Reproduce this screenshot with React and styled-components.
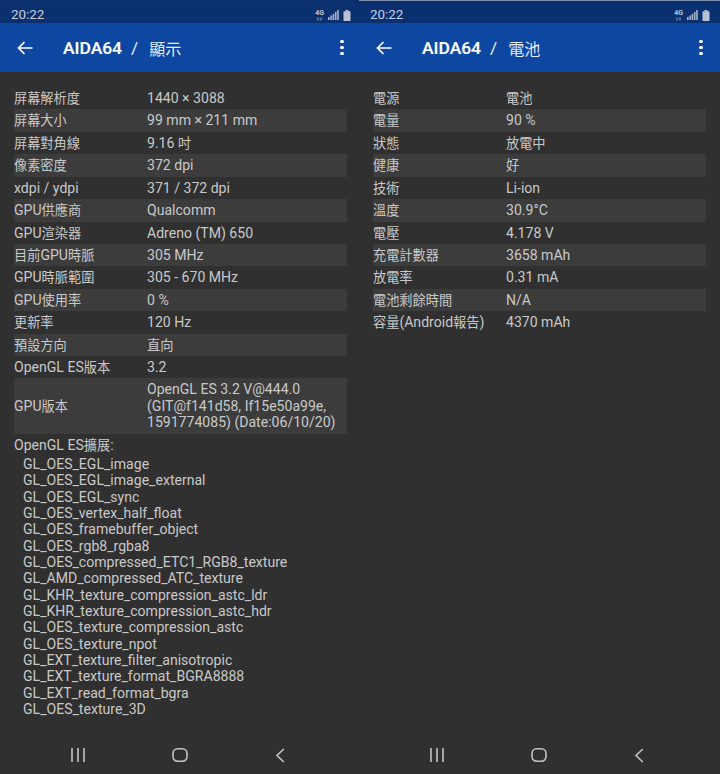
import styled, { createGlobalStyle } from 'styled-components';

const displayRows = [
  ['屏幕解析度', '1440 × 3088'],
  ['屏幕大小', '99 mm × 211 mm'],
  ['屏幕對角線', '9.16 吋'],
  ['像素密度', '372 dpi'],
  ['xdpi / ydpi', '371 / 372 dpi'],
  ['GPU供應商', 'Qualcomm'],
  ['GPU渲染器', 'Adreno (TM) 650'],
  ['目前GPU時脈', '305 MHz'],
  ['GPU時脈範圍', '305 - 670 MHz'],
  ['GPU使用率', '0 %'],
  ['更新率', '120 Hz'],
  ['預設方向', '直向'],
  ['OpenGL ES版本', '3.2'],
  ['GPU版本', 'OpenGL ES 3.2 V@444.0\n(GIT@f141d58, If15e50a99e,\n1591774085) (Date:06/10/20)'],
];

const batteryRows = [
  ['電源', '電池'],
  ['電量', '90 %'],
  ['狀態', '放電中'],
  ['健康', '好'],
  ['技術', 'Li-ion'],
  ['溫度', '30.9°C'],
  ['電壓', '4.178 V'],
  ['充電計數器', '3658 mAh'],
  ['放電率', '0.31 mA'],
  ['電池剩餘時間', 'N/A'],
  ['容量(Android報告)', '4370 mAh'],
];

const extensions = [
  'GL_OES_EGL_image',
  'GL_OES_EGL_image_external',
  'GL_OES_EGL_sync',
  'GL_OES_vertex_half_float',
  'GL_OES_framebuffer_object',
  'GL_OES_rgb8_rgba8',
  'GL_OES_compressed_ETC1_RGB8_texture',
  'GL_AMD_compressed_ATC_texture',
  'GL_KHR_texture_compression_astc_ldr',
  'GL_KHR_texture_compression_astc_hdr',
  'GL_OES_texture_compression_astc',
  'GL_OES_texture_npot',
  'GL_EXT_texture_filter_anisotropic',
  'GL_EXT_texture_format_BGRA8888',
  'GL_EXT_read_format_bgra',
  'GL_OES_texture_3D',
];

// The Han glyphs sit smaller than the Latin ones in the app, so they get their own span
const Mixed = ({ text }) =>
  text.split(/([\u4e00-\u9fff]+)/).map((part, index) =>
    index % 2 ? <Han key={index}>{part}</Han> : part
  );

const Phone = ({ title, rows, seam, children }) => (
  <Screen $seam={seam}>
    <StatusBar>
      <Clock>20:22</Clock>
      <StatusIcons>
        <NetworkBadge>
          4G
          <svg width="7" height="4" viewBox="0 0 7 4" fill="none" stroke="#8494ae" strokeWidth="0.8">
            <path d="M2 4V0.8M0.8 2 2 0.8 3.2 2M5 0v3.2M3.8 2 5 3.2 6.2 2" />
          </svg>
        </NetworkBadge>
        <svg width="11" height="10" viewBox="0 0 11 10" fill="#a9b4c8">
          <rect x="0" y="7" width="1.6" height="3" />
          <rect x="2.3" y="5.5" width="1.6" height="4.5" />
          <rect x="4.6" y="4" width="1.6" height="6" />
          <rect x="6.9" y="2" width="1.6" height="8" />
          <rect x="9.2" y="0" width="1.6" height="10" />
        </svg>
        <svg width="8" height="11" viewBox="0 0 8 11" fill="#b9c2d2">
          <rect x="2.4" y="0" width="3.2" height="1.4" />
          <rect x="0.5" y="1.2" width="7" height="9.8" rx="0.6" />
        </svg>
      </StatusIcons>
    </StatusBar>
    <AppBar>
      <svg width="16" height="14" viewBox="0 0 16 14" fill="none" stroke="#fff" strokeWidth="1.7">
        <path d="M15.5 7H1.5M7.5 1 1.5 7l6 6" />
      </svg>
      <AppTitle>
        <strong>AIDA64</strong>
        <Slash>/</Slash>
        <span>{title}</span>
      </AppTitle>
      <MenuDots>
        <i />
        <i />
        <i />
      </MenuDots>
    </AppBar>
    <Content>
      {rows.map(([label, value]) => (
        <Row key={label}>
          <Label><Mixed text={label} /></Label>
          <Value><Mixed text={value} /></Value>
        </Row>
      ))}
      {children}
    </Content>
    <NavBar>
      <svg width="14" height="14" viewBox="0 0 14 14" stroke="#c4c4c4" strokeWidth="1.6">
        <path d="M1 0v14M7 0v14M13 0v14" />
      </svg>
      <svg width="16" height="14" viewBox="0 0 16 14" fill="none" stroke="#c4c4c4" strokeWidth="1.6">
        <rect x="1" y="0.8" width="14" height="12.4" rx="4.6" />
      </svg>
      <svg width="10" height="15" viewBox="0 0 10 15" fill="none" stroke="#c4c4c4" strokeWidth="1.6">
        <path d="M8.8 1 2 7.5 8.8 14" />
      </svg>
    </NavBar>
  </Screen>
);

const App = () => (
  <>
    <GlobalStyle />
    <Page>
      <Phone title="顯示" rows={displayRows}>
        <ExtensionHeading><Mixed text="OpenGL ES擴展:" /></ExtensionHeading>
        <ExtensionList>
          {extensions.map(name => <li key={name}>{name}</li>)}
        </ExtensionList>
      </Phone>
      <Phone title="電池" rows={batteryRows} seam />
    </Page>
  </>
);

const GlobalStyle = createGlobalStyle`
  html, body {
    margin: 0;
    background: #303030;
  }

  body {
    font-family: Roboto, "Noto Sans CJK TC", sans-serif;
  }
`;

const Page = styled.div`
  display: grid;
  grid-template-columns: 359px 361px;
  width: 720px;
  height: 774px;
  overflow: hidden;
`;

const Screen = styled.div`
  display: flex;
  flex-direction: column;
  height: 774px;
  background: #303030;
  box-sizing: border-box;
  border-top: 1px solid ${props => (props.$seam ? '#7f90ad' : '#0a2e6b')};
`;

const StatusBar = styled.div`
  display: flex;
  align-items: center;
  justify-content: space-between;
  flex: 0 0 22px;
  padding: 6px calc(100% - 351px) 0 11px;
  box-sizing: border-box;
  background: #0a3070;
`;

const Clock = styled.span`
  color: #c6cfdd;
  font-size: 13.4px;
  line-height: 16px;
`;

const StatusIcons = styled.div`
  display: flex;
  align-items: center;
  gap: 4px;
`;

const NetworkBadge = styled.span`
  display: flex;
  flex-direction: column;
  align-items: center;
  gap: 1px;
  color: #b9c2d2;
  font-size: 7px;
  font-weight: 700;
  line-height: 6px;
`;

const AppBar = styled.div`
  display: flex;
  align-items: center;
  flex: 0 0 49px;
  padding: 0 calc(100% - 343.5px) 0 17px;
  box-sizing: border-box;
  background: #0d47a1;
  color: #fff;
`;

const AppTitle = styled.div`
  display: flex;
  align-items: center;
  flex: 1;
  margin-left: 30px;
  font-size: 16px;
  color: #e6ecf6;

  strong {
    font-size: 17.4px;
    font-weight: 500;
    color: #fff;
    -webkit-text-stroke: 0.2px #fff;
  }
`;

const Slash = styled.span`
  margin: 0 11px 0 9px;
  font-size: 17.4px;
`;

const MenuDots = styled.div`
  display: flex;
  flex-direction: column;
  gap: 2.6px;

  i {
    width: 3.6px;
    height: 3.6px;
    border-radius: 50%;
    background: #fff;
  }
`;

const Content = styled.div`
  flex: 1;
  padding: 15px calc(100% - 347px) 0 14px;
  color: #c9c9c9;
  font-size: 14.07px;
`;

const Han = styled.span`
  font-size: 13.2px;
  line-height: 0;
`;

const Row = styled.div`
  display: grid;
  grid-template-columns: 133px 1fr;
  align-items: center;
  min-height: 22.43px;
  line-height: 16.4px;

  &:nth-child(even) {
    background: #3c3c3c;
  }
`;

const Label = styled.span`
  white-space: nowrap;
`;

const Value = styled.span`
  padding: 3px 0;
  white-space: pre-line;
`;

const ExtensionHeading = styled.div`
  margin-top: 1px;
  line-height: 21.4px;
`;

const ExtensionList = styled.ul`
  list-style: none;
  margin: 0;
  padding: 0 0 0 9px;
  line-height: 16.33px;
`;

const NavBar = styled.div`
  display: grid;
  grid-template-columns: 14px 16px 10px;
  justify-content: space-between;
  align-items: center;
  flex: 0 0 42px;
  padding: 4px calc(100% - 285px) 0 71px;
  box-sizing: border-box;
`;

export default App;
